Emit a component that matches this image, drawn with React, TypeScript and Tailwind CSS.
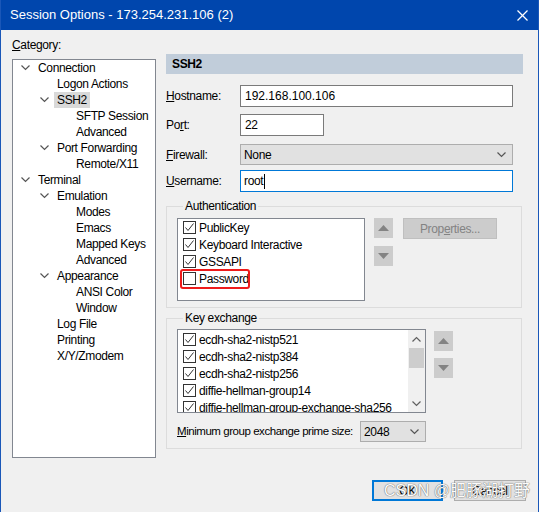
import React from 'react';

type Node = { label: string; level: number; open?: boolean; selected?: boolean };

const tree: Node[] = [
  { label: 'Connection', level: 0, open: true },
  { label: 'Logon Actions', level: 1 },
  { label: 'SSH2', level: 1, open: true, selected: true },
  { label: 'SFTP Session', level: 2 },
  { label: 'Advanced', level: 2 },
  { label: 'Port Forwarding', level: 1, open: true },
  { label: 'Remote/X11', level: 2 },
  { label: 'Terminal', level: 0, open: true },
  { label: 'Emulation', level: 1, open: true },
  { label: 'Modes', level: 2 },
  { label: 'Emacs', level: 2 },
  { label: 'Mapped Keys', level: 2 },
  { label: 'Advanced', level: 2 },
  { label: 'Appearance', level: 1, open: true },
  { label: 'ANSI Color', level: 2 },
  { label: 'Window', level: 2 },
  { label: 'Log File', level: 1 },
  { label: 'Printing', level: 1 },
  { label: 'X/Y/Zmodem', level: 1 },
];

const kex = [
  'ecdh-sha2-nistp521',
  'ecdh-sha2-nistp384',
  'ecdh-sha2-nistp256',
  'diffie-hellman-group14',
  'diffie-hellman-group-exchange-sha256',
];

function Chevron({ className = '' }: { className?: string }) {
  return (
    <svg width="9" height="6" viewBox="0 0 9 6" className={className}>
      <polyline points="0.5,0.5 4.5,4.5 8.5,0.5" fill="none" stroke="#555" strokeWidth="1.2" />
    </svg>
  );
}

function Check({ checked }: { checked: boolean }) {
  return (
    <span className="w-[13px] h-[13px] border border-[#333] bg-white flex items-center justify-center shrink-0">
      {checked && (
        <svg width="11" height="11" viewBox="0 0 11 11">
          <polyline points="1.5,5.5 4,8.5 9.5,1.5" fill="none" stroke="#333" strokeWidth="1" />
        </svg>
      )}
    </span>
  );
}

function ArrowButton({ up }: { up: boolean }) {
  return (
    <div className="w-[19px] h-[20px] bg-[#cccccc] flex items-center justify-center">
      <svg width="11" height="6" viewBox="0 0 11 6">
        {up ? <polygon points="0,6 5.5,0 11,6" fill="#838383" /> : <polygon points="0,0 5.5,6 11,0" fill="#838383" />}
      </svg>
    </div>
  );
}

export default function App() {
  return (
    <div className="w-[539px] h-[512px] bg-[#f0f0f0] border-x border-[#1a57b8] flex flex-col overflow-hidden relative text-[12px] tracking-[-0.35px] text-black font-['Liberation_Sans','Noto_Sans_CJK_SC',sans-serif]">
      {/* title bar */}
      <div className="h-[30px] shrink-0 bg-[#0046ad] flex items-center justify-between pl-[9px] pr-[10px] text-white text-[13px] tracking-normal">
        <span>Session Options - 173.254.231.106 (2)</span>
        <svg width="11" height="11" viewBox="0 0 11 11">
          <line x1="0.5" y1="0.5" x2="10.5" y2="10.5" stroke="white" strokeWidth="1.2" />
          <line x1="10.5" y1="0.5" x2="0.5" y2="10.5" stroke="white" strokeWidth="1.2" />
        </svg>
      </div>

      <div className="flex flex-row">
        {/* category tree */}
        <div className="ml-[11px] w-[144px] flex flex-col">
          <div className="pt-[7px] leading-[16px]">
            <span className="underline">C</span>ategory:
          </div>
          <div className="mt-[6px] h-[399px] border border-[#828790] bg-white">
            {tree.map((n, i) => (
              <div
                key={i}
                className="h-[16px] flex items-center leading-[16px]"
                style={{ paddingLeft: 8 + n.level * 19 }}
              >
                <span className="w-[17px] shrink-0 flex items-center">{n.open && <Chevron />}</span>
                <span className={n.selected ? 'bg-[#d9d9d9] px-[3px] -ml-[3px]' : ''}>{n.label}</span>
              </div>
            ))}
          </div>
        </div>

        {/* SSH2 page */}
        <div className="ml-[10px] w-[357px] pt-[24px] flex flex-col">
          <div className="h-[20px] bg-[#c1cdda] pl-[6px] font-bold flex items-center">SSH2</div>

          <div className="mt-[11px] h-[22px] flex items-center">
            <span className="w-[74px]">
              <span className="underline">H</span>ostname:
            </span>
            <div className="w-[273px] h-[22px] border border-[#7a7a7a] bg-white px-[4px] flex items-center tracking-normal">192.168.100.106</div>
          </div>

          <div className="mt-[7px] h-[22px] flex items-center">
            <span className="w-[74px]">
              Po<span className="underline">r</span>t:
            </span>
            <div className="w-[84px] h-[22px] border border-[#7a7a7a] bg-white px-[4px] flex items-center">22</div>
          </div>

          <div className="mt-[8px] h-[21px] flex items-center">
            <span className="w-[74px]">
              <span className="underline">F</span>irewall:
            </span>
            <div className="w-[273px] h-[21px] border border-[#adadad] bg-[#e1e1e1] pl-[3px] pr-[6px] flex items-center justify-between">
              <span>None</span>
              <Chevron />
            </div>
          </div>

          <div className="mt-[5px] h-[22px] flex items-center">
            <span className="w-[74px]">
              <span className="underline">U</span>sername:
            </span>
            <div className="w-[273px] h-[22px] border border-[#0078d7] bg-white px-[3px] flex items-center">
              root<span className="w-[1px] h-[15px] bg-black ml-[1px]" />
            </div>
          </div>

          {/* Authentication */}
          <fieldset className="mt-[6px] w-[356px] border border-[#dcdcdc] pl-[10px] pt-[4px] pb-[6px]">
            <legend className="ml-[6px] px-[2px] leading-[16px]">Authentication</legend>
            <div className="flex flex-row items-start">
              <div className="w-[188px] h-[83px] border border-[#828790] bg-white flex flex-col">
                {[
                  ['PublicKey', true],
                  ['Keyboard Interactive', true],
                  ['GSSAPI', true],
                  ['Password', false],
                ].map(([label, on]) => (
                  <div key={label as string} className="relative h-[17px] pl-[5px] flex items-center gap-[3px]">
                    <Check checked={on as boolean} />
                    <span>{label as string}</span>
                    {label === 'Password' && (
                      <span className="absolute left-[2px] -top-[1px] w-[70px] h-[20px] border-2 border-[#ee1b1b] rounded-[3px]" />
                    )}
                  </div>
                ))}
              </div>
              <div className="ml-[9px] flex flex-col gap-[8px]">
                <ArrowButton up />
                <ArrowButton up={false} />
              </div>
              <div className="ml-[10px] w-[94px] h-[21px] bg-[#cccccc] border border-[#bfbfbf] text-[#838383] flex items-center justify-center">
                Prop<span className="underline">e</span>rties...
              </div>
            </div>
          </fieldset>

          {/* Key exchange */}
          <fieldset className="mt-[2px] w-[356px] border border-[#dcdcdc] pl-[10px] pt-[3px] pb-[6px]">
            <legend className="ml-[6px] px-[2px] leading-[16px]">Key exchange</legend>
            <div className="flex flex-row items-start">
              <div className="w-[249px] h-[84px] border border-[#828790] bg-white flex flex-row overflow-hidden">
                <div className="flex-1 pt-[1px] overflow-hidden">
                  {kex.map((k) => (
                    <div key={k} className="h-[17px] pl-[5px] flex items-center gap-[3px] whitespace-nowrap">
                      <Check checked />
                      <span>{k}</span>
                    </div>
                  ))}
                </div>
                <div className="w-[17px] bg-[#f0f0f0] flex flex-col">
                  <div className="h-[17px] flex items-center justify-center">
                    <svg width="9" height="6" viewBox="0 0 9 6">
                      <polyline points="0.5,5.5 4.5,1.5 8.5,5.5" fill="none" stroke="#606060" strokeWidth="1.2" />
                    </svg>
                  </div>
                  <div className="flex-1 px-[1px] pt-[1px]">
                    <div className="h-[20px] bg-[#cdcdcd]" />
                  </div>
                  <div className="h-[17px] flex items-center justify-center">
                    <svg width="9" height="6" viewBox="0 0 9 6">
                      <polyline points="0.5,0.5 4.5,4.5 8.5,0.5" fill="none" stroke="#606060" strokeWidth="1.2" />
                    </svg>
                  </div>
                </div>
              </div>
              <div className="ml-[8px] mt-[2px] flex flex-col gap-[7px]">
                <ArrowButton up />
                <ArrowButton up={false} />
              </div>
            </div>
            <div className="mt-[8px] flex items-center">
              <span className="w-[183px] whitespace-nowrap text-[11.5px] tracking-[-0.45px]">
                <span className="underline">M</span>inimum group exchange prime size:
              </span>
              <div className="w-[66px] h-[21px] border border-[#adadad] bg-[#e1e1e1] pl-[3px] pr-[6px] flex items-center justify-between">
                <span>2048</span>
                <Chevron />
              </div>
            </div>
          </fieldset>
        </div>
      </div>

      {/* dialog buttons */}
      <div className="mt-[22px] pr-[12px] flex justify-end gap-[11px]">
        <div className="w-[71px] h-[21px] border-2 border-[#0078d7] bg-[#e1e1e1] flex items-center justify-center">OK</div>
        <div className="w-[72px] h-[21px] border border-[#adadad] bg-[#e1e1e1] flex items-center justify-center">Cancel</div>
      </div>

      {/* watermark */}
      <span className="absolute left-[383px] top-[481px] text-[16px] leading-[20px] tracking-normal text-[#fbfbfb] whitespace-nowrap [text-shadow:0_0_1px_#6a6a6a,0_0_1px_#6a6a6a]">
        CSDN @肥豚湖打野
      </span>
    </div>
  );
}
